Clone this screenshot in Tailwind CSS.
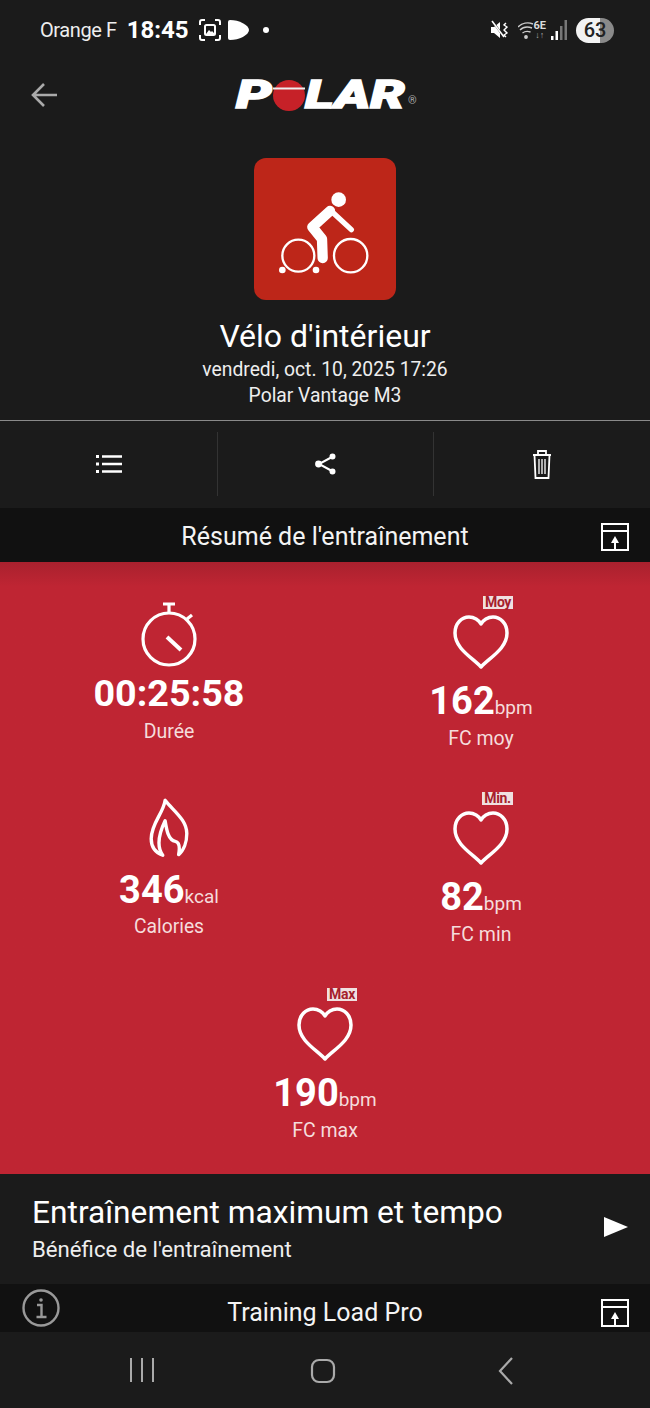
<!DOCTYPE html>
<html lang="en">
<head>
    <meta charset="UTF-8">
    <meta name="viewport" content="width=device-width, initial-scale=1.0">
    <title>Polar Flow</title>
    <script src="https://cdn.jsdelivr.net/npm/@tailwindcss/browser@4"></script>
</head>
<body class="w-[650px] h-[1408px] overflow-hidden bg-[#1b1b1b] text-white font-['Roboto',sans-serif]">

    <!-- status bar -->
    <div class="h-[58px] pt-[2px] pl-[40px] pr-[36px] flex items-center">
        <span class="text-[20px] tracking-[-0.4px] text-[#eee]">Orange F</span>
        <span class="ml-[10px] text-[24px] font-bold">18:45</span>
        <svg class="ml-[10px]" width="22" height="22" viewBox="0 0 22 22" fill="none" stroke="white" stroke-width="2"><path d="M1 6V3a2 2 0 0 1 2-2h3M16 1h3a2 2 0 0 1 2 2v3M21 16v3a2 2 0 0 1-2 2h-3M6 21H3a2 2 0 0 1-2-2v-3"/><rect x="6" y="6" width="10" height="10" rx="1.5"/><path d="M7 15l3-4 2 2 1-1 3 3z" fill="white" stroke="none"/></svg>
        <svg class="ml-[6px]" width="22" height="22" viewBox="0 0 22 22"><path d="M1 3Q1 1 3 1C12 1 22 6 22 11C22 16 12 21 3 21Q1 21 1 19Z" fill="white"/></svg>
        <span class="ml-[14px] w-[6px] h-[6px] rounded-full bg-white"></span>
        <svg class="ml-auto" width="20" height="20" viewBox="0 0 20 20" fill="none" stroke="white"><path d="M1 7h3l6-5v16l-6-5H1z" fill="white" stroke="none"/><path d="M3 2l11 15" stroke="#1b1b1b" stroke-width="2"/><path d="M2 1l12 16" stroke-width="1.5"/><path d="M16 3l-2 2 3 2-3 3 3 3-3 2 2 2" stroke-width="1.4"/></svg>
        <svg class="ml-[8px]" width="16" height="18" viewBox="0 0 16 18" fill="none" stroke="#ccc" stroke-width="1.4"><path d="M0 6c4-4 10-5 15-3M2 9c3-3 8-3.500 12-2M4.500 12c2-1.500 5-2 8-1"/><circle cx="8" cy="16" r="1.200" fill="#ccc"/></svg>
        <div class="-mt-[1px] flex flex-col items-center text-[#ddd]">
            <span class="text-[11px] leading-[11px] font-bold">6E</span>
            <span class="text-[9px] leading-[9px] font-bold text-[#aaa]">↓↑</span>
        </div>
        <svg class="ml-[5px]" width="16" height="20" viewBox="0 0 16 20"><rect x="0" y="16" width="2.500" height="4" fill="white"/><rect x="4.500" y="11" width="2.500" height="9" fill="white"/><rect x="9" y="6" width="2.500" height="14" fill="#777"/><rect x="13.500" y="0" width="2.500" height="20" fill="#777"/></svg>
        <div class="ml-[9px] w-[38px] h-[25px] rounded-full bg-linear-to-r from-[#f2f2f2] from-63% to-[#8a8a8a] to-63% flex items-center justify-center text-[20px] font-medium text-[#222]">63</div>
    </div>

    <!-- app header -->
    <div class="h-[72px] relative flex items-center justify-center">
        <svg class="absolute left-[31px] top-[24px]" width="27" height="26" viewBox="0 0 27 26" fill="none" stroke="#aaa" stroke-width="2.600"><path d="M26 13H3M13 2L2 13l11 11"/></svg>
        <div class="flex items-center mr-[6px] mt-[2px] italic font-black text-[39px] leading-none [-webkit-text-stroke:1.500px_white]">
            <span class="w-[37px] origin-left scale-x-[1.45]">P</span>
            <svg class="shrink-0" width="32" height="31" viewBox="0 0 32 31"><ellipse cx="16" cy="15.500" rx="16" ry="15.500" fill="#c62128"/><rect x="0" y="7.500" width="32" height="2" fill="#eee"/></svg>
            <span class="w-[103px] origin-left scale-x-[1.4]">LAR</span>
        </div>
        <span class="absolute left-[408px] top-[37px] text-[11px] leading-[12px] text-[#aaa]">®</span>
    </div>

    <!-- activity -->
    <div class="pt-[28px] flex flex-col items-center h-[290px]">
        <svg width="142" height="142" viewBox="102 25 426 426">
            <rect x="102" y="25" width="426" height="426" rx="36" fill="#bd2619"/>
            <circle cx="356" cy="150" r="22" fill="white"/>
            <path d="M330 184L277 232L306 268L308 325" fill="none" stroke="white" stroke-width="31" stroke-linecap="round" stroke-linejoin="round"/>
            <path d="M340 190L394 240" fill="none" stroke="white" stroke-width="16" stroke-linecap="round"/>
            <circle cx="235" cy="318" r="48" fill="none" stroke="white" stroke-width="7"/>
            <circle cx="392" cy="318" r="50" fill="none" stroke="white" stroke-width="7"/>
            <circle cx="187" cy="361" r="10" fill="white"/>
            <circle cx="288" cy="361" r="10" fill="white"/>
        </svg>
        <h1 class="mt-[17px] text-[32px] leading-[38px]">Vélo d'intérieur</h1>
        <p class="mt-[2px] text-[19.300px] leading-[26px] text-[#eee]">vendredi, oct. 10, 2025 17:26</p>
        <p class="text-[19.300px] leading-[26px] text-[#eee]">Polar Vantage M3</p>
    </div>

    <!-- actions -->
    <div class="border-t border-[#8a8a8a] h-[88px] pt-[11px] grid grid-cols-[218px_216px_1fr]">
        <div class="h-[64px] border-r border-[#333] flex items-center justify-center">
            <svg width="26" height="20" viewBox="0 0 26 20" fill="none" stroke="white" stroke-width="2.600"><path d="M6 2.500h20M6 10h20M6 17.500h20"/><path d="M0 2.500h3M0 10h3M0 17.500h3" stroke-width="3.200"/></svg>
        </div>
        <div class="h-[64px] border-r border-[#333] flex items-center justify-center">
            <svg width="22" height="22" viewBox="0 0 22 22" fill="white" stroke="white" stroke-width="2"><path d="M17 4L4 11l13 7" fill="none"/><circle cx="17.500" cy="3.500" r="2"/><circle cx="3.500" cy="11" r="2.400"/><circle cx="17.500" cy="18.500" r="2"/></svg>
        </div>
        <div class="h-[64px] flex items-center justify-center">
            <svg width="20" height="30" viewBox="0 0 20 30" fill="none" stroke="white" stroke-width="1.800"><path d="M1 6h18M6 6V2h8v4M2.500 6l1 23h13l1-23"/><path d="M7 10v15M10 10v15M13 10v15" stroke-width="1.300"/></svg>
        </div>
    </div>

    <!-- section header -->
    <div class="h-[54px] bg-[#111] grid grid-cols-[1fr_auto_1fr] items-center px-[21px]">
        <span></span>
        <h2 class="mt-[3px] text-[25px] text-[#f4f4f4]">Résumé de l'entraînement</h2>
        <svg class="mt-[3px] justify-self-end" width="28" height="28" viewBox="0 0 28 28" fill="none" stroke="white" stroke-width="2"><rect x="1" y="1" width="26" height="26"/><path d="M1 8h26M14 26V18"/><path d="M14 13l-4 7h8z" fill="white" stroke="none"/></svg>
    </div>

    <!-- summary -->
    <div class="h-[612px] pt-[28px] px-[13px] bg-linear-to-b from-[#a9212e] from-0% to-[#bf2533] to-[4%] grid grid-cols-2 grid-rows-[196px_196px_192px]">
        <div class="flex flex-col items-center pt-[12px]">
            <svg width="64" height="68" viewBox="0 0 64 68" fill="none" stroke="white" stroke-width="3.200"><circle cx="32" cy="37" r="26"/><path d="M32 11V3M26 2h12" /><path d="M50 17l5-4"/><path d="M30 35l14 13" stroke-width="4"/></svg>
            <p class="mt-[1px] text-[37.700px] leading-[44px] font-bold">00:25:58</p>
            <p class="mt-[4px] text-[19.500px] leading-[26px] text-[#f5dcdc]">Durée</p>
        </div>
        <div class="flex flex-col items-center">
            <div class="relative w-[60px] h-[80px] pt-[25px] flex justify-center">
                <span class="absolute left-[32px] top-[6px] w-[30px] h-[13px] bg-[#f0e0e0] text-[#a5202c] text-[14px] leading-[13px] tracking-tight font-bold text-center">Moy</span>
                <svg width="56" height="54" viewBox="0 0 56 54" fill="none" stroke="white" stroke-width="3.500" stroke-linejoin="round"><path d="M28 52C20 43 2 34 2 18C2 8 9 2 16 2C21 2 26 5 28 9C30 5 35 2 40 2C47 2 54 8 54 18C54 34 36 43 28 52Z"/></svg>
            </div>
            <p class="mt-[9px] text-[38px] leading-[44px] font-bold">162<span class="text-[19px] leading-none font-normal text-[#f5dcdc]">bpm</span></p>
            <p class="mt-[3px] text-[19.500px] leading-[26px] text-[#f5dcdc]">FC moy</p>
        </div>
        <div class="flex flex-col items-center pt-[12px]">
            <svg width="40" height="60" viewBox="148 25 117 177" fill="none" stroke="white" stroke-width="10" stroke-linejoin="round"><path d="M195 32C190 70 154 100 154 145C154 170 167 186 188 194C172 172 172 140 195 92C200 122 205 150 225 153C235 155 240 165 235 192C250 180 259 155 259 130C259 90 222 65 195 32Z"/></svg>
            <p class="mt-[10px] text-[38px] leading-[44px] font-bold">346<span class="text-[19px] leading-none font-normal text-[#f5dcdc]">kcal</span></p>
            <p class="mt-[2px] text-[19.300px] leading-[26px] text-[#f5dcdc]">Calories</p>
        </div>
        <div class="flex flex-col items-center">
            <div class="relative w-[60px] h-[80px] pt-[25px] flex justify-center">
                <span class="absolute left-[31px] top-[6px] w-[31px] h-[13px] bg-[#f0e0e0] text-[#a5202c] text-[14px] leading-[13px] tracking-tight font-bold text-center">Min.</span>
                <svg width="56" height="54" viewBox="0 0 56 54" fill="none" stroke="white" stroke-width="3.500" stroke-linejoin="round"><path d="M28 52C20 43 2 34 2 18C2 8 9 2 16 2C21 2 26 5 28 9C30 5 35 2 40 2C47 2 54 8 54 18C54 34 36 43 28 52Z"/></svg>
            </div>
            <p class="mt-[9px] text-[38px] leading-[44px] font-bold">82<span class="text-[19px] leading-none font-normal text-[#f5dcdc]">bpm</span></p>
            <p class="mt-[3px] text-[19.500px] leading-[26px] text-[#f5dcdc]">FC min</p>
        </div>
        <div class="col-span-2 flex flex-col items-center">
            <div class="relative w-[60px] h-[80px] pt-[25px] flex justify-center">
                <span class="absolute left-[32px] top-[6px] w-[30px] h-[13px] bg-[#f0e0e0] text-[#a5202c] text-[14px] leading-[13px] tracking-tight font-bold text-center">Max</span>
                <svg width="56" height="54" viewBox="0 0 56 54" fill="none" stroke="white" stroke-width="3.500" stroke-linejoin="round"><path d="M28 52C20 43 2 34 2 18C2 8 9 2 16 2C21 2 26 5 28 9C30 5 35 2 40 2C47 2 54 8 54 18C54 34 36 43 28 52Z"/></svg>
            </div>
            <p class="mt-[9px] text-[38px] leading-[44px] font-bold">190<span class="text-[19px] leading-none font-normal text-[#f5dcdc]">bpm</span></p>
            <p class="mt-[3px] text-[19.500px] leading-[26px] text-[#f5dcdc]">FC max</p>
        </div>
    </div>

    <!-- benefit -->
    <div class="h-[110px] pl-[32px] pr-[22px] flex items-center">
        <div class="flex-1 -mt-[2px]">
            <p class="text-[31.700px] leading-[42px]">Entraînement maximum et tempo</p>
            <p class="text-[22.200px] leading-[30px] text-[#eee]">Bénéfice de l'entraînement</p>
        </div>
        <svg class="-mt-[4px]" width="24" height="20" viewBox="0 0 24 20"><path d="M0 0L24 10L0 20Z" fill="white"/></svg>
    </div>

    <!-- training load header -->
    <div class="h-[48px] bg-[#111] grid grid-cols-[1fr_auto_1fr] items-center px-[21px]">
        <svg class="ml-[1px]" width="38" height="38" viewBox="0 0 38 38" fill="none" stroke="#999" stroke-width="2.400"><circle cx="19" cy="19" r="17.500"/><circle cx="19" cy="11" r="1.800" fill="#999" stroke="none"/><path d="M15 16h4.500v12M14.500 28h10"/></svg>
        <h2 class="mt-[10px] text-[25px] text-[#f4f4f4]">Training Load Pro</h2>
        <svg class="mt-[10px] justify-self-end" width="28" height="28" viewBox="0 0 28 28" fill="none" stroke="white" stroke-width="2"><rect x="1" y="1" width="26" height="26"/><path d="M1 8h26M14 26V18"/><path d="M14 13l-4 7h8z" fill="white" stroke="none"/></svg>
    </div>

    <!-- nav bar -->
    <div class="h-[76px] relative flex items-center justify-center">
        <svg class="absolute left-[130px] top-[26px]" width="24" height="24" viewBox="0 0 24 24" fill="none" stroke="#aaa" stroke-width="2"><path d="M1 0v24M12 0v24M23 0v24"/></svg>
        <svg class="absolute left-[310px] top-[26px]" width="26" height="26" viewBox="0 0 26 26" fill="none" stroke="#aaa" stroke-width="2.200"><rect x="2" y="2" width="22" height="22" rx="7"/></svg>
        <svg class="absolute left-[498px] top-[25px]" width="16" height="28" viewBox="0 0 16 28" fill="none" stroke="#aaa" stroke-width="2.200"><path d="M14 1L2 14l12 13"/></svg>
    </div>

</body>
</html>
